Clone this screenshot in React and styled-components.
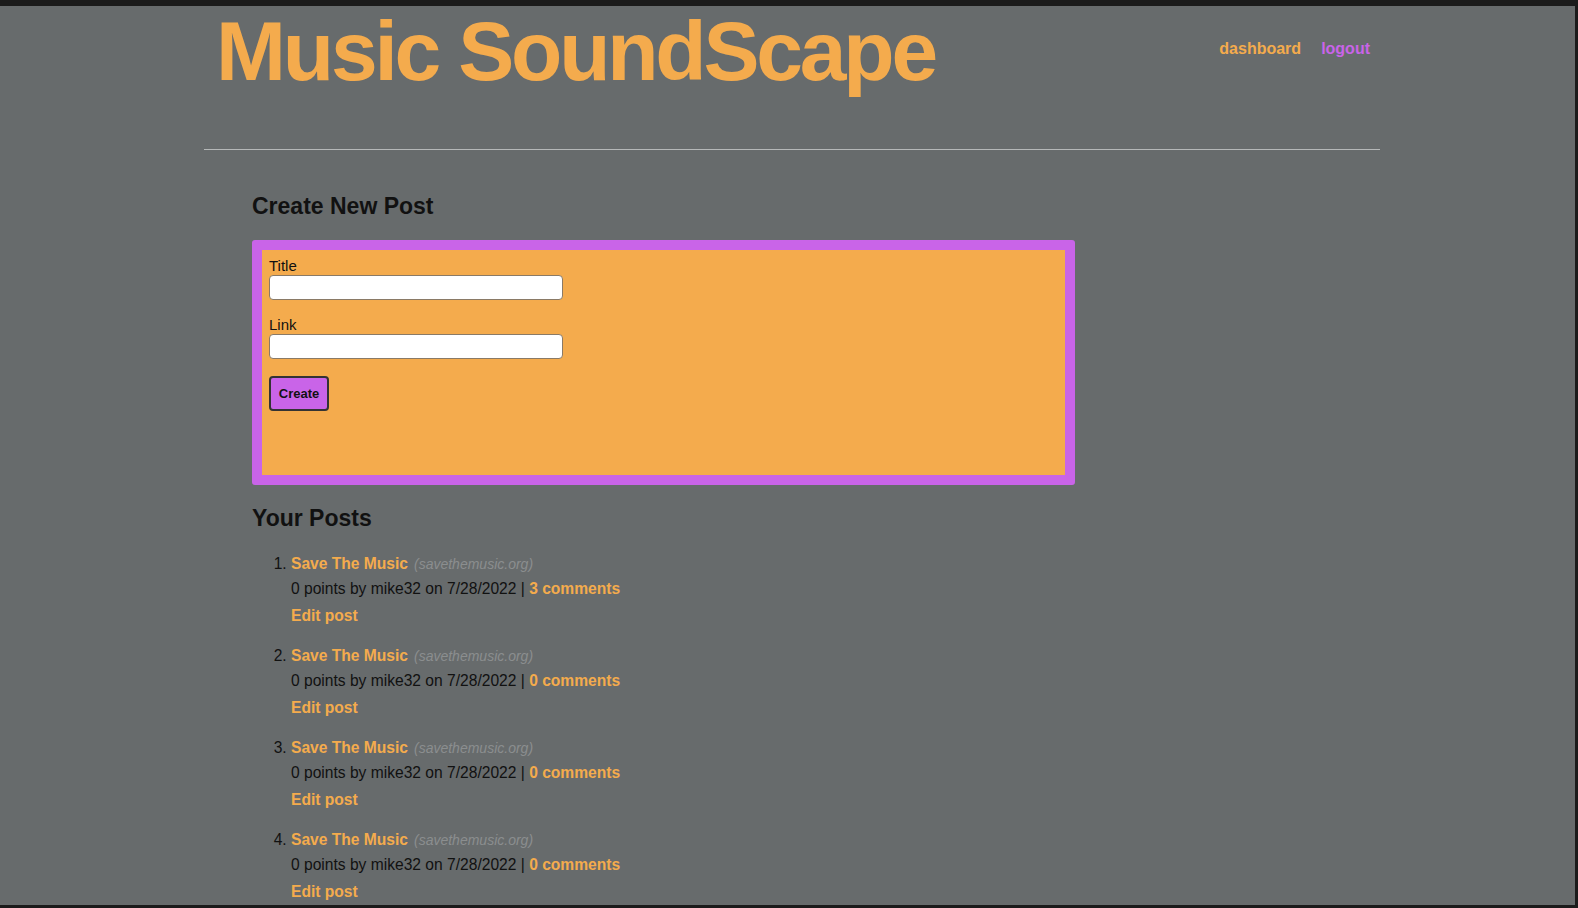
import styled, { createGlobalStyle } from "styled-components";

const GlobalStyle = createGlobalStyle`
  html, body {
    margin: 0;
    padding: 0;
    background-color: #1b1b1b;
    font-family: "Liberation Sans", Arial, Helvetica, sans-serif;
  }
`;

const Frame = styled.div`
  margin-top: 6px;
  margin-right: 3px;
  height: 899px;
  background-color: #676b6c;
  overflow: hidden;
`;

const Wrapper = styled.div`
  width: 1176px;
  margin-left: 204px;
`;

const Header = styled.header`
  display: flex;
  justify-content: space-between;
  align-items: flex-start;
  padding: 0 10px 0 12px;
  height: 143px;
  border-bottom: 1px solid #b5b8b8;
`;

const Logo = styled.h1`
  margin: 0;
  padding: 0 6px 4px 0;
  font-size: 84px;
  font-weight: 700;
  line-height: 90px;
  color: #f4ab4d;
  letter-spacing: -3.2px;
  white-space: nowrap;
`;

const Nav = styled.nav`
  display: flex;
  gap: 20px;
  padding-top: 34px;
  font-size: 16px;
  font-weight: 700;
`;

const NavLink = styled.a`
  color: ${(props) => (props.$purple ? "#c964e8" : "#f4ab4d")};
  text-decoration: none;
`;

const Main = styled.main`
  padding: 43px 48px 0 48px;
`;

const SectionTitle = styled.h2`
  margin: 0 0 ${(props) => props.$gap || 20}px 0;
  font-size: 23px;
  font-weight: 700;
  color: #111;
`;

const FormBox = styled.form`
  width: 789px;
  height: 209px;
  background-color: #f4ab4d;
  border: 10px solid #c964e8;
  border-radius: 3px;
  padding: 8px 7px;
  box-sizing: content-box;
  display: flex;
  flex-direction: column;
  align-items: flex-start;
  margin-bottom: 20px;
`;

const Label = styled.label`
  font-size: 15px;
  color: #111;
  line-height: 16px;
`;

const Input = styled.input`
  width: 294px;
  height: 25px;
  box-sizing: border-box;
  border: 1px solid #8a7a66;
  border-radius: 4px;
  background: #fff;
  margin: 1px 0 17px 0;
`;

const Button = styled.button`
  width: 60px;
  height: 35px;
  background-color: #c964e8;
  border: 2px solid #333;
  border-radius: 4px;
  font-family: "Liberation Sans", Arial, sans-serif;
  font-size: 13px;
  font-weight: 700;
  color: #111;
`;

const PostList = styled.ol`
  margin: 0;
  padding-left: 39px;
  color: #111;
  font-size: 15.6px;
`;

const PostItem = styled.li`
  margin-bottom: 15px;
`;

const TitleLine = styled.div`
  line-height: 24px;
`;

const PostTitle = styled.a`
  color: #f4ab4d;
  font-weight: 700;
  text-decoration: none;
`;

const Domain = styled.span`
  color: #8b8e8f;
  font-style: italic;
  font-size: 14px;
  margin-left: 6px;
`;

const Meta = styled.div`
  color: #111;
  line-height: 26px;
`;

const OrangeLink = styled.a`
  color: #f4ab4d;
  font-weight: 700;
  text-decoration: none;
`;

const EditLink = styled(OrangeLink)`
  display: block;
  line-height: 27px;
`;

const posts = [
  { id: 1, comments: 3 },
  { id: 2, comments: 0 },
  { id: 3, comments: 0 },
  { id: 4, comments: 0 },
];

function App() {
  return (
    <>
      <GlobalStyle />
      <Frame>
        <Wrapper>
          <Header>
            <Logo>Music SoundScape</Logo>
            <Nav>
              <NavLink href="#">dashboard</NavLink>
              <NavLink href="#" $purple>
                logout
              </NavLink>
            </Nav>
          </Header>
          <Main>
            <SectionTitle $gap={20}>Create New Post</SectionTitle>
            <FormBox onSubmit={(e) => e.preventDefault()}>
              <Label>Title</Label>
              <Input type="text" />
              <Label>Link</Label>
              <Input type="text" />
              <Button type="submit">Create</Button>
            </FormBox>
            <SectionTitle $gap={20}>Your Posts</SectionTitle>
            <PostList>
              {posts.map((post) => (
                <PostItem key={post.id}>
                  <TitleLine>
                    <PostTitle href="#">Save The Music</PostTitle>
                    <Domain>(savethemusic.org)</Domain>
                  </TitleLine>
                  <Meta>
                    0 points by mike32 on 7/28/2022 |{" "}
                    <OrangeLink href="#">{post.comments} comments</OrangeLink>
                  </Meta>
                  <EditLink href="#">Edit post</EditLink>
                </PostItem>
              ))}
            </PostList>
          </Main>
        </Wrapper>
      </Frame>
    </>
  );
}

export default App;
